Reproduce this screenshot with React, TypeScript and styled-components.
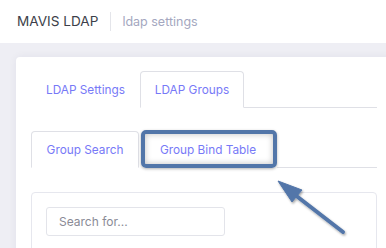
import styled, { createGlobalStyle } from "styled-components";

const GlobalStyle = createGlobalStyle`
  html, body {
    margin: 0;
    padding: 0;
    width: 386px;
    height: 248px;
    overflow: hidden;
    background: #eeeef4;
    font-family: "Inter", "Open Sans", sans-serif;
  }
  * { box-sizing: border-box; }
`;

const Page = styled.div`
  position: relative;
  width: 386px;
  height: 248px;
  overflow: hidden;
`;

const Header = styled.header`
  height: 43px;
  background: #ffffff;
  display: flex;
  align-items: center;
  padding-left: 17px;
`;

const Brand = styled.div`
  font-size: 13.6px;
  color: #3d3f4a;
  padding-right: 12px;
  border-right: 1px solid #e4e5ea;
  line-height: 19px;
`;

const Crumb = styled.div`
  font-size: 12.5px;
  color: #a4a7c0;
  padding-left: 11px;
`;

const Main = styled.main`
  padding: 14px 0 0 16px;
`;

const Card = styled.section`
  width: 376px;
  background: #ffffff;
  border-radius: 4px;
  padding: 14px 15px 15px;
  box-shadow: 0 0 8px rgba(40, 40, 80, 0.06);
`;

const TabBar = styled.div<{ $gap?: number }>`
  display: flex;
  border-bottom: 1px solid #dfe0e6;
  margin-bottom: ${(p) => p.$gap ?? 0}px;
`;

const Tab = styled.div<{ $active?: boolean; $w: number }>`
  width: ${(p) => p.$w}px;
  height: 37px;
  margin-bottom: -1px;
  display: flex;
  align-items: center;
  justify-content: center;
  font-size: 11.8px;
  color: #7779f7;
  border: 1px solid ${(p) => (p.$active ? "#dfe0e6" : "transparent")};
  border-bottom-color: ${(p) => (p.$active ? "#ffffff" : "transparent")};
  border-radius: 4px 4px 0 0;
  background: #ffffff;
`;

const SubTabs = styled.div`
  position: relative;
`;

const Highlight = styled.div`
  position: absolute;
  left: 110px;
  top: -1px;
  width: 136px;
  height: 38px;
  border: 4px solid #5276a9;
  border-radius: 5px;
  box-shadow: inset 0 0 6px rgba(0, 0, 0, 0.25), 0 1px 3px rgba(0, 0, 0, 0.3);
`;

const InnerCard = styled.div`
  border: 1px solid #e6e7ee;
  border-radius: 4px;
  padding: 14px 14px 0;
  height: 80px;
`;

const SearchInput = styled.input`
  display: block;
  width: 179px;
  height: 29px;
  border: 1px solid #e3e4ea;
  border-radius: 3px;
  padding: 0 12px;
  font-family: inherit;
  font-size: 12px;
  color: #555;
  outline: none;
  &::placeholder {
    color: #8a8b96;
  }
`;

const TableTop = styled.div`
  margin-top: 12px;
  border-top: 1px solid #e3e4ea;
`;

const Arrow = styled.svg`
  position: absolute;
  left: 0;
  top: 0;
  pointer-events: none;
`;

export default function App() {
  return (
    <Page>
      <GlobalStyle />
      <Header>
        <Brand>MAVIS LDAP</Brand>
        <Crumb>ldap settings</Crumb>
      </Header>
      <Main>
        <Card>
          <TabBar $gap={23}>
            <Tab $w={109}>LDAP Settings</Tab>
            <Tab $w={104} $active>
              LDAP Groups
            </Tab>
          </TabBar>
          <SubTabs>
            <TabBar $gap={24}>
              <Tab $w={108} $active>
                Group Search
              </Tab>
              <Tab $w={138}>Group Bind Table</Tab>
            </TabBar>
            <Highlight />
          </SubTabs>
          <InnerCard>
            <SearchInput placeholder="Search for..." />
            <TableTop />
          </InnerCard>
        </Card>
      </Main>
      <Arrow width="386" height="248" viewBox="0 0 386 248">
        <defs>
          <filter id="sh" x="-20%" y="-20%" width="140%" height="140%">
            <feDropShadow dx="1" dy="1.5" stdDeviation="1.2" floodColor="#000" floodOpacity="0.35" />
          </filter>
        </defs>
        <g filter="url(#sh)" fill="#5276a9" stroke="#5276a9">
          <line x1="343" y1="232" x2="290" y2="191" strokeWidth="4" strokeLinecap="round" />
          <polygon points="278,181 302,190 292,202" strokeWidth="1" strokeLinejoin="round" />
        </g>
      </Arrow>
    </Page>
  );
}
